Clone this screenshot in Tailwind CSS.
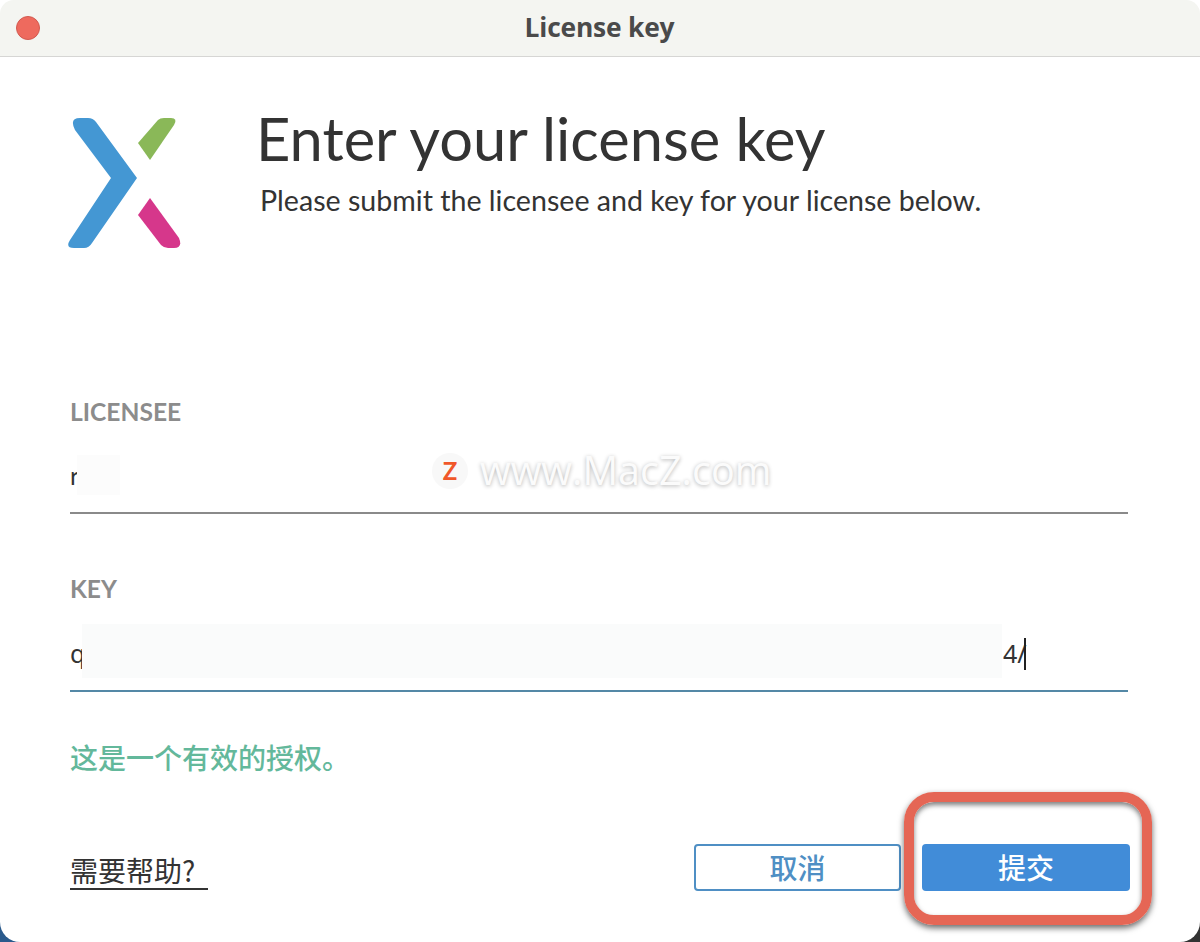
<!DOCTYPE html>
<html lang="en">
    <head>
        <meta charset="UTF-8" />
        <title>License key</title>
        <script src="https://cdn.jsdelivr.net/npm/@tailwindcss/browser@4"></script>
    </head>
    <body class="bg-white">
        <div class="relative w-[1200px] h-[942px] overflow-hidden bg-white font-['Lato','Noto_Sans_CJK_SC',sans-serif] text-[#333]">
            <!-- desktop peeking through the bottom corners -->
            <div class="absolute left-0 bottom-0 w-[24px] h-[24px] bg-[#2a5a8c]"></div>
            <div class="absolute right-0 bottom-0 w-[24px] h-[24px] bg-[#333]"></div>

            <div class="relative h-full flex flex-col bg-white rounded-t-[14px] rounded-b-[20px]">
                <!-- title bar -->
                <div class="relative h-[57px] shrink-0 flex items-center justify-center bg-[#f4f5f1] border-b border-[#d6d6d4] rounded-t-[14px]">
                    <span class="absolute left-[16px] top-[16px] w-[24px] h-[24px] rounded-full bg-[#ee6a5e] border border-[#d25a50]"></span>
                    <span class="-mt-[1px] -ml-[1px] text-[26.4px] font-bold text-[#4a4a4a] font-['Open_Sans',sans-serif] tracking-[-0.2px]">License key</span>
                </div>

                <div class="flex-1 flex flex-col pl-[70px] pr-[72px]">
                    <!-- header -->
                    <div class="flex h-[205px] pt-[61px]">
                        <svg class="w-[114px] h-[130px] -ml-[2px] shrink-0" viewBox="68 118 114 130">
                            <path fill="#4497d3" d="M80 118 L88 118 Q93 118 96 122 L137 178 L92 243 Q89 248 84 248 L74 248 Q65 248 70 240 L111 178 L75 130 Q69 118 80 118 Z" />
                            <path fill="#8ab858" d="M138 143 L158 120 Q160 118 164 118 L171 118 Q178 118 174 125 L150 160 Z" />
                            <path fill="#d6378b" d="M150 198 L179 238 Q183 248 174 248 L168 248 Q164 248 161 245 L138 215 Z" />
                        </svg>
                        <div class="ml-[74px] -mt-[16px]">
                            <h1 class="text-[59.6px] leading-[72px] font-normal text-[#333]">Enter your license key</h1>
                            <p class="ml-[4px] mt-[8px] text-[28.6px] leading-[36px] text-[#333]">Please submit the licensee and key for your license below.</p>
                        </div>
                    </div>

                    <!-- licensee -->
                    <div class="mt-[135px] text-[24.6px] leading-[30px] font-bold text-[#8c8c8c]">LICENSEE</div>
                    <div class="relative mt-[29px] h-[58px] border-b-2 border-[#8a8a8a] text-[25px] leading-[36px] pt-[1px]">
                        r
                        <span class="absolute left-[7px] top-[-1px] w-[43px] h-[40px] bg-[#fcfcfc]"></span>
                    </div>

                    <!-- key -->
                    <div class="mt-[60px] text-[24.6px] leading-[30px] font-bold text-[#8c8c8c]">KEY</div>
                    <div class="relative mt-[21px] h-[67px] border-b-2 border-[#5488a6] text-[25px] leading-[36px] pt-[10px] font-['Noto_Sans',sans-serif]">
                        q
                        <span class="absolute left-[12px] -top-[1px] w-[920px] h-[54px] bg-[#fafbfb]"></span>
                        <span class="absolute left-[933px] top-[10px]">4/</span>
                        <span class="absolute left-[954px] top-[13px] w-[2px] h-[32px] bg-[#222]"></span>
                    </div>

                    <div class="mt-[45px] text-[28px] leading-[40px] font-medium text-[#63b89b] font-['Noto_Sans_CJK_SC',sans-serif]">这是一个有效的授权。</div>

                    <!-- footer -->
                    <div class="mt-[67px] flex items-start">
                        <a class="mt-[8px] border-b-2 border-[#333] text-[28px] leading-[36px] h-[38px] font-['Noto_Sans_CJK_SC',sans-serif] text-[#333] whitespace-pre">需要帮助?  </a>
                        <div class="ml-auto flex gap-[21px] -mr-[2px]">
                            <button class="w-[207px] h-[47px] pb-[2px] rounded-[4px] border-2 border-[#4f8fc4] text-[28px] font-medium text-[#4f8fc4] font-['Noto_Sans_CJK_SC',sans-serif]">取消</button>
                            <button class="w-[208px] h-[47px] pb-[2px] rounded-[4px] bg-[#418cd8] text-[28px] font-medium text-white font-['Noto_Sans_CJK_SC',sans-serif]">提交</button>
                        </div>
                    </div>
                </div>
            </div>

            <!-- watermark -->
            <div class="absolute left-[432px] top-[452px] flex items-center gap-[12px]">
                <span class="w-[36px] h-[36px] rounded-full bg-[#f8f8f8] flex items-center justify-center text-[24px] font-bold text-[#f0572a] leading-none">Z</span>
                <span class="-mt-[2px] text-[39.6px] leading-[40px] font-medium text-[#fbfbfb] [text-shadow:0_1px_4px_rgba(0,0,0,0.3)] font-['Open_Sans',sans-serif]">www.MacZ.com</span>
            </div>

            <!-- annotation box -->
            <div class="absolute left-[904px] top-[792px] w-[248px] h-[133px] rounded-[30px] border-[10px] border-[#e56655] shadow-[0_3px_6px_rgba(0,0,0,0.6),inset_0_3px_5px_rgba(0,0,0,0.5)]"></div>
        </div>
    </body>
</html>
